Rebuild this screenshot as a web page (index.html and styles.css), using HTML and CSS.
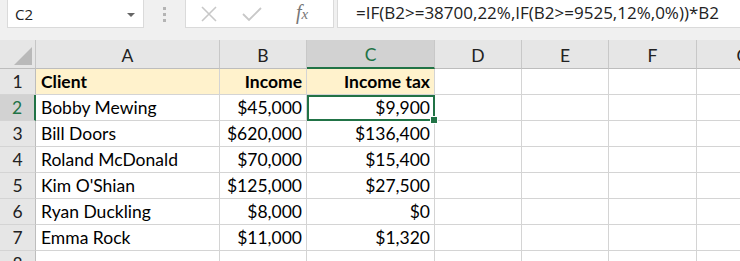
FILE: index.html
```html
<!DOCTYPE html>
<html lang="en">
<head>
    <meta charset="UTF-8">
    <title>Income tax</title>
    <link rel="stylesheet" href="styles.css">
</head>
<body>
    <div class="toolbar">
        <div class="name-box">
            <span>C2</span>
            <span class="caret"></span>
        </div>
        <div class="grip">
            <span></span><span></span><span></span>
        </div>
        <div class="fx-buttons">
            <svg class="btn-icon" width="18" height="18" viewBox="0 0 18 18">
                <path d="M2 2 L16 16 M16 2 L2 16" stroke="#c8c8c8" stroke-width="1.6" fill="none"/>
            </svg>
            <svg class="btn-icon" width="22" height="18" viewBox="0 0 22 18">
                <path d="M2 9 L8 15 L20 3" stroke="#c8c8c8" stroke-width="1.8" fill="none"/>
            </svg>
            <span class="fx"><i>f</i><i class="x">x</i></span>
        </div>
        <div class="formula">=IF(B2&gt;=38700,22%,IF(B2&gt;=9525,12%,0%))*B2</div>
    </div>

    <div class="sheet">
        <div class="corner"><span class="tri"></span></div>
        <div class="col-head">A</div>
        <div class="col-head">B</div>
        <div class="col-head active">C</div>
        <div class="col-head">D</div>
        <div class="col-head">E</div>
        <div class="col-head">F</div>
        <div class="col-head">G</div>

        <div class="row-head">1</div>
        <div class="cell head-row">Client</div>
        <div class="cell head-row num">Income</div>
        <div class="cell head-row num">Income tax</div>
        <div class="cell"></div><div class="cell"></div><div class="cell"></div><div class="cell"></div>

        <div class="row-head active">2</div>
        <div class="cell">Bobby Mewing</div>
        <div class="cell num">$45,000</div>
        <div class="cell num selected">$9,900<span class="handle"></span></div>
        <div class="cell"></div><div class="cell"></div><div class="cell"></div><div class="cell"></div>

        <div class="row-head">3</div>
        <div class="cell">Bill Doors</div>
        <div class="cell num">$620,000</div>
        <div class="cell num">$136,400</div>
        <div class="cell"></div><div class="cell"></div><div class="cell"></div><div class="cell"></div>

        <div class="row-head">4</div>
        <div class="cell">Roland McDonald</div>
        <div class="cell num">$70,000</div>
        <div class="cell num">$15,400</div>
        <div class="cell"></div><div class="cell"></div><div class="cell"></div><div class="cell"></div>

        <div class="row-head">5</div>
        <div class="cell">Kim O'Shian</div>
        <div class="cell num">$125,000</div>
        <div class="cell num">$27,500</div>
        <div class="cell"></div><div class="cell"></div><div class="cell"></div><div class="cell"></div>

        <div class="row-head">6</div>
        <div class="cell">Ryan Duckling</div>
        <div class="cell num">$8,000</div>
        <div class="cell num">$0</div>
        <div class="cell"></div><div class="cell"></div><div class="cell"></div><div class="cell"></div>

        <div class="row-head">7</div>
        <div class="cell">Emma Rock</div>
        <div class="cell num">$11,000</div>
        <div class="cell num">$1,320</div>
        <div class="cell"></div><div class="cell"></div><div class="cell"></div><div class="cell"></div>

        <div class="row-head">8</div>
        <div class="cell"></div><div class="cell"></div><div class="cell"></div>
        <div class="cell"></div><div class="cell"></div><div class="cell"></div><div class="cell"></div>
    </div>
</body>
</html>
```

FILE: styles.css
```css
body {
    margin: 0;
    width: 740px;
    height: 261px;
    overflow: hidden;
    background-color: #fff;
    font-family: "Lato", "Open Sans", sans-serif;
    color: #000;
}
.toolbar {
    display: flex;
    height: 40px;
    background-color: #f0f0f0;
    box-sizing: border-box;
}
.name-box {
    margin-left: 7px;
    width: 137px;
    height: 28px;
    background-color: #fff;
    border: 1px solid #dadada;
    border-top: none;
    box-sizing: border-box;
    display: flex;
    align-items: center;
    justify-content: space-between;
    padding: 0 8px 0 7px;
    font-family: "Open Sans", sans-serif;
    font-size: 15px;
    color: #222;
}
.caret {
    width: 0;
    height: 0;
    border-left: 4px solid transparent;
    border-right: 4px solid transparent;
    border-top: 4px solid #666;
    margin-top: 2px;
}
.grip {
    width: 41px;
    height: 28px;
    display: flex;
    flex-direction: column;
    align-items: center;
    justify-content: center;
    gap: 3px;
}
.grip span {
    width: 3px;
    height: 3px;
    background-color: #b4b4b4;
}
.fx-buttons {
    width: 149px;
    height: 28px;
    background-color: #fff;
    border: 1px solid #dadada;
    border-top: none;
    box-sizing: border-box;
    display: flex;
    align-items: center;
    padding-left: 14px;
    gap: 23px;
}
.fx {
    font-family: "Liberation Serif", serif;
    font-size: 20px;
    color: #777;
    margin-left: 10px;
    margin-top: -2px;
}
.fx .x {
    font-size: 15px;
}
.formula {
    margin-left: 3px;
    flex: 1;
    height: 28px;
    background-color: #fff;
    border: 1px solid #dadada;
    border-top: none;
    border-right: none;
    box-sizing: border-box;
    padding-left: 18px;
    font-family: "Open Sans", sans-serif;
    font-size: 17px;
    line-height: 26px;
    color: #222;
    white-space: nowrap;
}
.sheet {
    display: grid;
    width: 790px;
    grid-template-columns: 36px 184px 87px 128px 87px 87px 88px 93px;
    grid-template-rows: 29px repeat(8, 26px);
}
.corner {
    background-color: #e6e6e6;
    border-right: 1px solid #c6c6c6;
    border-bottom: 1px solid #bdbdbd;
    position: relative;
}
.tri {
    position: absolute;
    right: 3px;
    bottom: 3px;
    width: 0;
    height: 0;
    border-left: 18px solid transparent;
    border-bottom: 18px solid #b9b9b9;
}
.col-head {
    background-color: #e6e6e6;
    border-right: 1px solid #c8c8c8;
    border-bottom: 1px solid #bdbdbd;
    display: flex;
    align-items: center;
    justify-content: center;
    font-size: 17.5px;
    color: #222;
    padding-top: 2px;
    box-sizing: border-box;
}
.col-head.active {
    background-color: #d2d2d2;
    color: #217346;
    border-bottom: 2px solid #217346;
}
.row-head {
    background-color: #e6e6e6;
    border-right: 1px solid #bdbdbd;
    border-bottom: 1px solid #d4d4d4;
    display: flex;
    align-items: center;
    justify-content: center;
    font-size: 17.5px;
    color: #222;
    box-sizing: border-box;
}
.row-head.active {
    background-color: #d2d2d2;
    color: #217346;
    border-right: 2px solid #217346;
}
.cell {
    border-right: 1px solid #d4d4d4;
    border-bottom: 1px solid #d4d4d4;
    box-sizing: border-box;
    font-size: 17.5px;
    line-height: 25px;
    padding: 0 4px 0 5px;
    white-space: nowrap;
    overflow: hidden;
}
.cell.num {
    text-align: right;
}
.cell.head-row {
    background-color: #fff2cc;
    font-weight: bold;
}
.cell.selected {
    position: relative;
    overflow: visible;
    outline: 2px solid #217346;
    outline-offset: -2px;
    z-index: 1;
}
.handle {
    position: absolute;
    right: -4px;
    bottom: -4px;
    width: 6px;
    height: 6px;
    background-color: #217346;
    border: 1px solid #fff;
}
```
